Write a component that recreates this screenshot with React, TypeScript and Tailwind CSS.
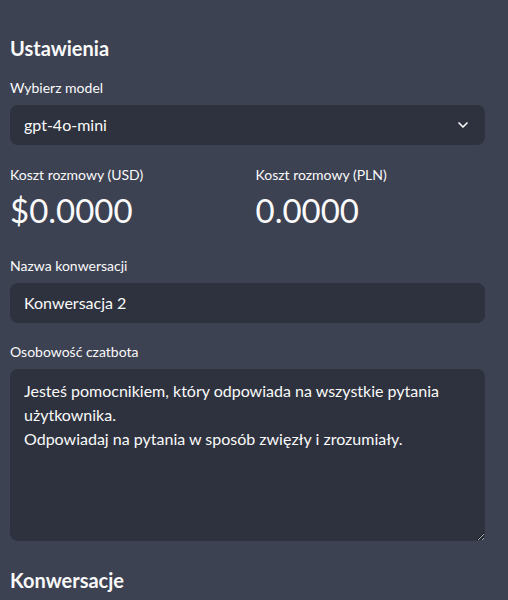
import { ChevronDown } from "lucide-react";

const font = { fontFamily: '"Source Sans Pro", "Lato", "Noto Sans", sans-serif' };

function Label({ children, mb = "mb-[9px]" }: { children: React.ReactNode; mb?: string }) {
  return <div className={`${mb} h-[17px] text-[14px] leading-[17px] text-[#fafafa]`}>{children}</div>;
}

function Metric({ label, value }: { label: string; value: string }) {
  return (
    <div>
      <Label mb="mb-[8px]">{label}</Label>
      <div className="text-[33px] leading-[38px] font-normal text-[#fafafa]">{value}</div>
    </div>
  );
}

export default function App() {
  return (
    <div className="h-[600px] w-[508px] overflow-hidden bg-[#3d4253] pl-[10px] pr-[23px]" style={font}>
      <h2 className="pt-[34px] text-[20px] leading-[28px] font-bold text-[#fafafa]">Ustawienia</h2>

      <div className="mt-[17px]">
        <Label>Wybierz model</Label>
        <div className="flex h-[40px] items-center justify-between rounded-lg bg-[#2e323e] pl-[14px] pr-[14px] text-[16px] text-[#fafafa]">
          <span>gpt-4o-mini</span>
          <ChevronDown size={16} strokeWidth={2.5} className="text-[#fafafa]" />
        </div>
      </div>

      <div className="mt-[21px] grid grid-cols-2 gap-4">
        <Metric label="Koszt rozmowy (USD)" value="$0.0000" />
        <Metric label="Koszt rozmowy (PLN)" value="0.0000" />
      </div>

      <div className="mt-[28px]">
        <Label>Nazwa konwersacji</Label>
        <div className="flex h-[40px] items-center rounded-lg bg-[#2e323e] px-[14px] text-[16px] text-[#fafafa]">
          Konwersacja 2
        </div>
      </div>

      <div className="mt-[20px]">
        <Label>Osobowość czatbota</Label>
        <textarea
          readOnly
          className="block h-[172px] w-full resize-y rounded-lg bg-[#2e323e] px-[14px] pt-[10px] pb-[9px] text-[16px] leading-[24px] text-[#fafafa] outline-none"
          style={font}
          defaultValue={
            "Jesteś pomocnikiem, który odpowiada na wszystkie pytania użytkownika.\nOdpowiadaj na pytania w sposób zwięzły i zrozumiały."
          }
        />
      </div>

      <h2 className="mt-[25px] text-[20px] leading-[28px] font-bold text-[#fafafa]">Konwersacje</h2>
    </div>
  );
}
